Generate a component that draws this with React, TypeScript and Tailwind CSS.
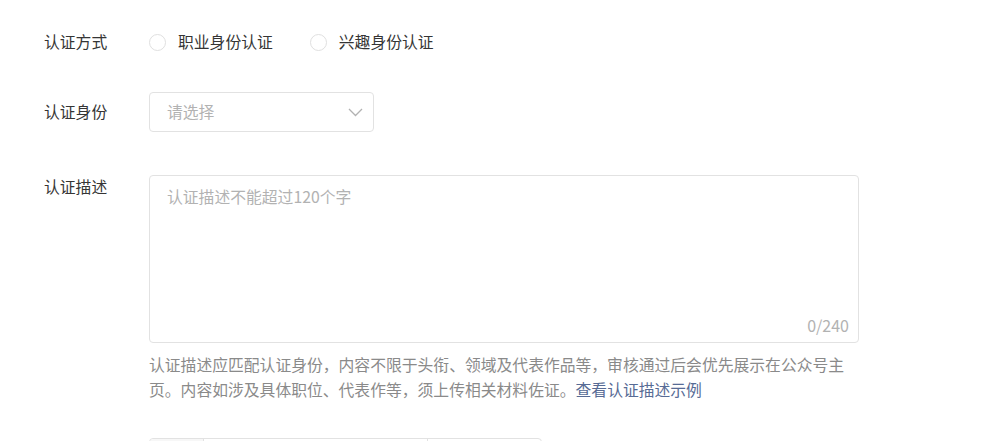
import React from "react";

function Radio({ label }: { label: string }) {
  return (
    <label className="flex items-center">
      <span className="w-[17px] h-[17px] rounded-full border border-[#e0e0e0] bg-white" />
      <span className="ml-[12px] text-[15.8px] leading-[24px] text-[#353535]">{label}</span>
    </label>
  );
}

export default function App() {
  return (
    <div
      className="w-[990px] h-[441px] overflow-hidden bg-white pl-[44px] pt-[30px]"
      style={{ fontFamily: '"Noto Sans CJK SC", "Noto Sans", sans-serif' }}
    >
      {/* Row 1 */}
      <div className="flex">
        <div className="w-[105px] text-[15.8px] leading-[24px] text-[#353535]">认证方式</div>
        <div className="flex items-center gap-[37px]">
          <Radio label="职业身份认证" />
          <Radio label="兴趣身份认证" />
        </div>
      </div>

      {/* Row 2 */}
      <div className="flex items-center mt-[38px]">
        <div className="w-[105px] text-[15.8px] leading-[24px] text-[#353535]">认证身份</div>
        <div className="w-[225px] h-[40px] border border-[#e2e2e2] rounded-[4px] flex items-center justify-between pl-[17px] pr-[10px]">
          <span className="text-[15.8px] text-[#b2b2b2]">请选择</span>
          <svg width="15" height="9" viewBox="0 0 15 9" fill="none">
            <path d="M1 1l6.5 6.5L14 1" stroke="#b2b2b2" strokeWidth="1.3" />
          </svg>
        </div>
      </div>

      {/* Row 3 */}
      <div className="flex mt-[43px]">
        <div className="w-[105px] text-[15.8px] leading-[24px] text-[#353535]">认证描述</div>
        <div className="w-[710px]">
          <div className="relative h-[168px] border border-[#e2e2e2] rounded-[4px] pl-[17px] pt-[9px]">
            <div className="text-[15.8px] leading-[24px] text-[#b2b2b2]">认证描述不能超过120个字</div>
            <div className="absolute right-[9px] bottom-[5px] text-[16px] leading-[24px] text-[#b2b2b2]">0/240</div>
          </div>
          <p className="mt-[9px] text-[15.8px] leading-[25px] text-[#8a8a8a]">
            认证描述应匹配认证身份，内容不限于头衔、领域及代表作品等，审核通过后会优先展示在公众号主页。内容如涉及具体职位、代表作等，须上传相关材料佐证。
            <span className="text-[#576b95]">查看认证描述示例</span>
          </p>
          <div className="mt-[36px] w-[393px] h-[40px] flex border border-[#e2e2e2] rounded-[4px]">
            <div className="w-[53px] bg-[#f7f7f7] rounded-l-[4px]" />
            <div className="w-[225px] border-l border-r border-[#e2e2e2]" />
            <div className="flex-1" />
          </div>
        </div>
      </div>
    </div>
  );
}
